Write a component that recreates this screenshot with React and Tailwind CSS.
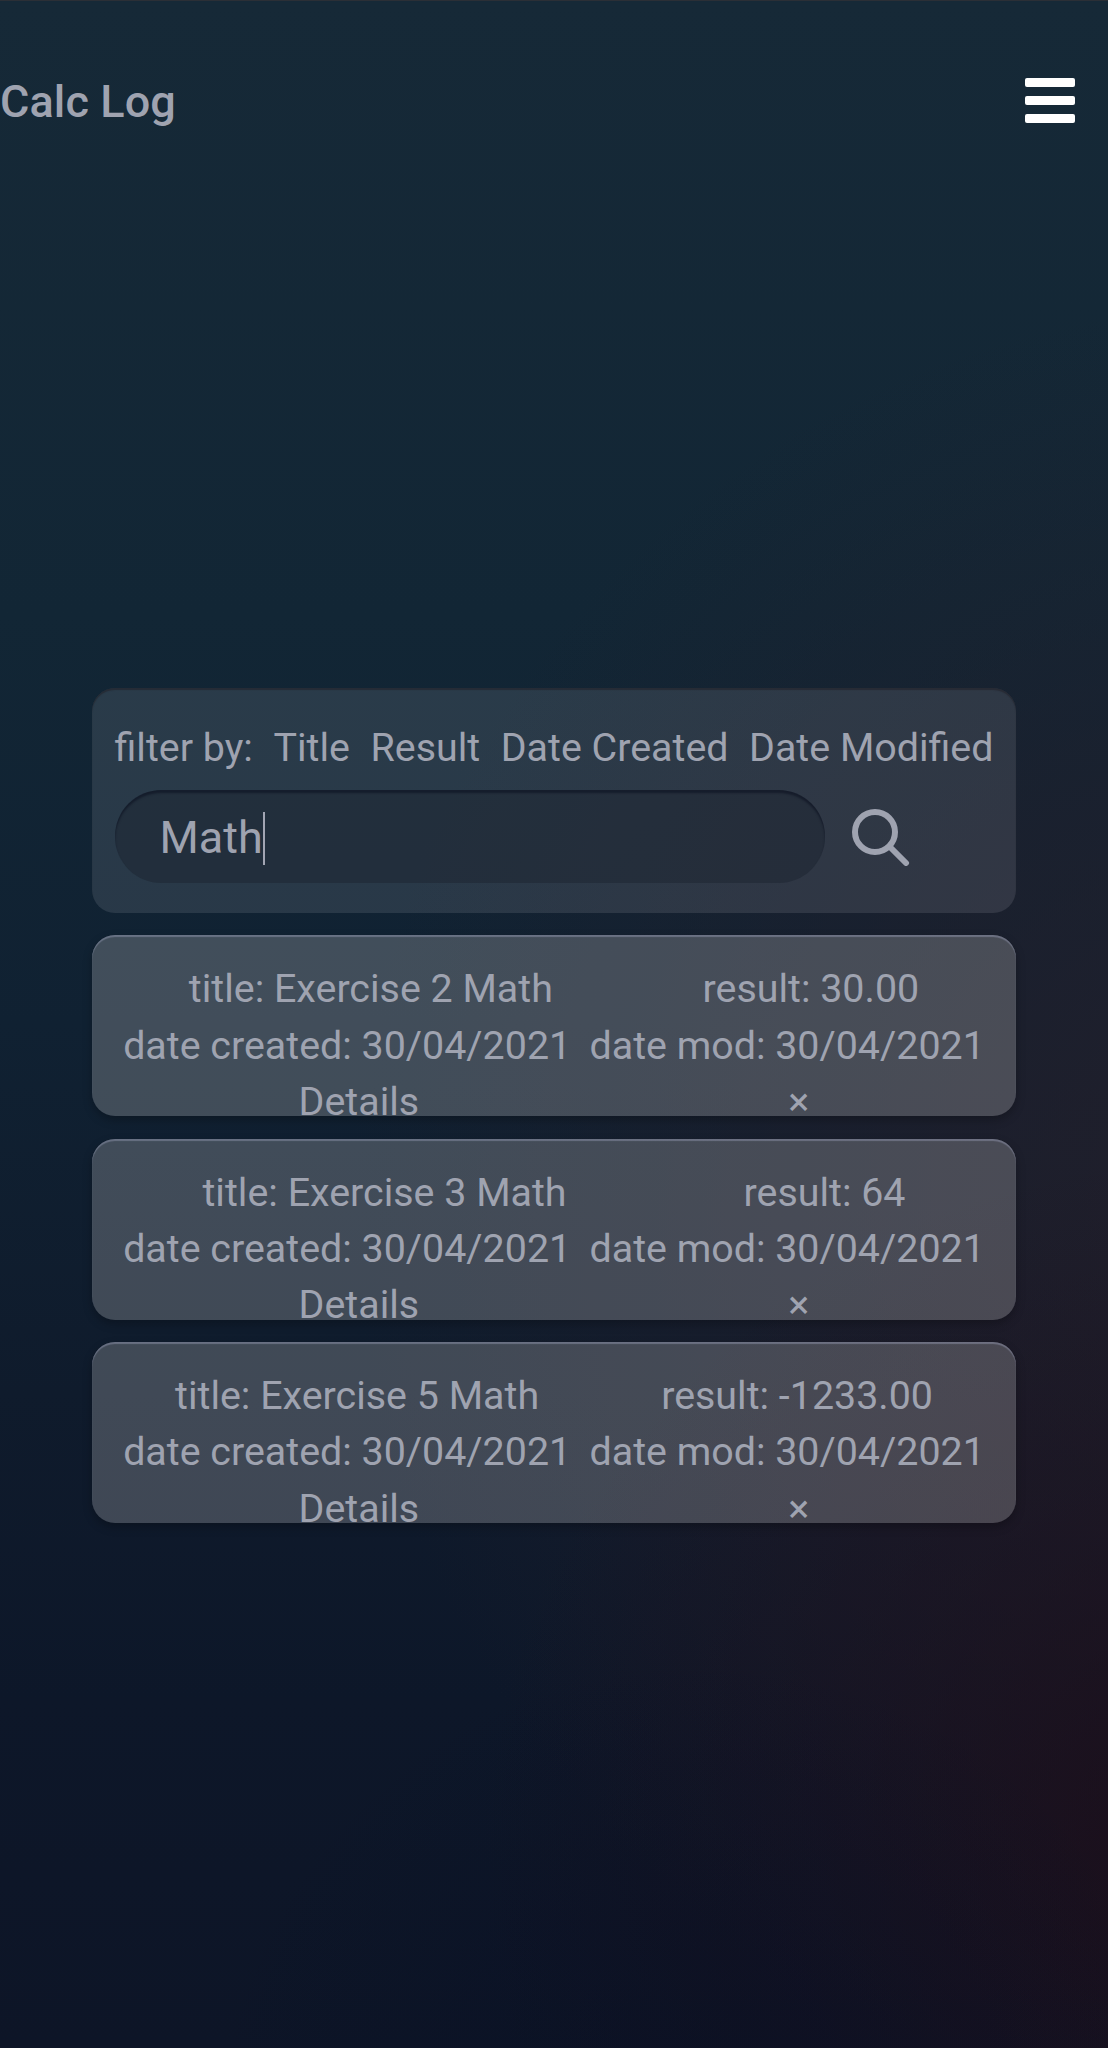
const entries = [
  { title: 'Exercise 2 Math', result: '30.00' },
  { title: 'Exercise 3 Math', result: '64' },
  { title: 'Exercise 5 Math', result: '-1233.00' },
];

const filters = ['Title', 'Result', 'Date Created', 'Date Modified'];

function Header() {
  return (
    <header className="flex h-[200px] items-center justify-between border-t border-[#2b2f36] pr-[33px]">
      <h1 className="pt-[2px] text-[45px] leading-[56px] font-medium tracking-[0.1px]">Calc Log</h1>
      <button aria-label="Menu" className="flex w-[50px] flex-col gap-[9px]">
        <span className="h-[9px] rounded-[2px] bg-white" />
        <span className="h-[9px] rounded-[2px] bg-white" />
        <span className="h-[9px] rounded-[2px] bg-white" />
      </button>
    </header>
  );
}

function SearchPanel() {
  return (
    <section className="h-[225px] rounded-[23px] bg-[#d2d2d7]/13 px-[22.5px] pt-[32px] shadow-[inset_0_2px_1px_rgba(35,35,43,0.65)]">
      <div className="flex justify-between whitespace-nowrap">
        <span>filter by:</span>
        {filters.map((f) => (
          <button key={f}>{f}</button>
        ))}
      </div>
      <div className="mt-[14px] flex items-center">
        <div className="flex h-[93px] w-[710px] items-center rounded-full bg-[#1c2430]/50 pt-[3px] pl-[45px] text-[45px] shadow-[inset_0_3px_2px_rgba(8,12,28,0.5)]">
          <span>Math</span>
          <span className="h-[53px] w-[2px] bg-[#a2a5b3]" />
        </div>
        <svg className="ml-[27px] h-[58px] w-[58px]" viewBox="0 0 58 58" fill="none" stroke="#9fa3b0" strokeWidth="6">
          <circle cx="23" cy="24" r="20" />
          <path d="M37.5 38.5 54 55" strokeLinecap="round" />
        </svg>
      </div>
    </section>
  );
}

function Entry({ title, result }) {
  return (
    <article className="h-[181px] overflow-hidden rounded-[23px] bg-[#d4d4d4]/25 px-[22px] pt-[26px] whitespace-nowrap shadow-[inset_0_2px_1px_rgba(160,165,190,0.42),0_4px_10px_rgba(0,0,0,0.25)]">
      <div className="flex justify-around">
        <span>title: {title}</span>
        <span>result: {result}</span>
      </div>
      <div className="flex justify-around">
        <span>date created: 30/04/2021</span>
        <span>date mod: 30/04/2021</span>
      </div>
      <div className="flex justify-around">
        <button>Details</button>
        <button>×</button>
      </div>
    </article>
  );
}

export default function App() {
  return (
    <div className="h-[2048px] overflow-hidden bg-[radial-gradient(ellipse_500px_500px_at_700px_2150px,rgba(8,14,34,0.55),transparent),radial-gradient(ellipse_750px_700px_at_1230px_1850px,rgba(30,13,24,0.85),rgba(30,14,26,0.42)_50%,transparent),radial-gradient(ellipse_900px_900px_at_1250px_1200px,rgba(36,31,42,0.85),rgba(34,30,42,0.5)_50%,transparent),linear-gradient(180deg,#162937_0%,#122635_30%,#102132_50%,#0f1b2c_68%,#0d1729_83%,#0d1527_100%)] font-[Roboto,sans-serif] text-[39.4px] leading-[56.3px] text-[#9fa3b0]">
      <Header />
      <main className="mx-auto mt-[488.2px] flex w-[924px] flex-col gap-[22.3px]">
        <SearchPanel />
        {entries.map((e) => (
          <Entry key={e.title} {...e} />
        ))}
      </main>
    </div>
  );
}
